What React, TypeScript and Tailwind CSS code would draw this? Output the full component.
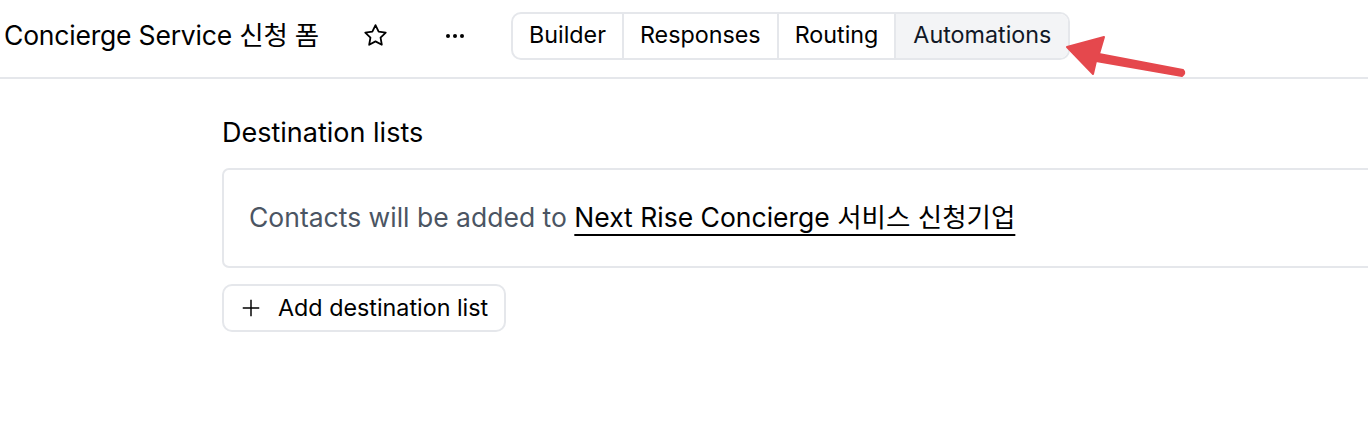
import React from "react";

export default function App() {
  const font = { fontFamily: "Inter, 'Noto Sans CJK KR', sans-serif" };
  return (
    <div className="relative w-[1368px] h-[436px] bg-white overflow-hidden text-black" style={font}>
      <div className="flex items-center h-[79px] border-b-2 border-[#e5e7eb] pl-[4px] pb-[6px]">
        <div className="text-[26.5px] leading-none tracking-[-0.2px]">Concierge Service 신청 폼</div>
        <button className="ml-[42px] w-[28px] h-[28px] flex items-center justify-center">
          <svg width="27" height="27" viewBox="0 0 24 24" fill="none" stroke="black" strokeWidth="1.6" strokeLinejoin="round">
            <path d="M12 2.8l2.8 5.8 6.3.9-4.6 4.4 1.1 6.3L12 17.2l-5.6 3 1.1-6.3-4.6-4.4 6.3-.9z" />
          </svg>
        </button>
        <button className="ml-[54px] w-[24px] h-[24px] flex items-center justify-center gap-[3px]">
          <span className="w-[4px] h-[4px] rounded-full bg-black" />
          <span className="w-[4px] h-[4px] rounded-full bg-black" />
          <span className="w-[4px] h-[4px] rounded-full bg-black" />
        </button>
        <div className="ml-[44px] flex h-[48px] border-2 border-[#e5e7eb] rounded-[10px] overflow-hidden text-[23.3px]">
          <div className="flex items-center px-[16px] border-r-2 border-[#e5e7eb]">Builder</div>
          <div className="flex items-center px-[16px] border-r-2 border-[#e5e7eb]">Responses</div>
          <div className="flex items-center px-[16px] border-r-2 border-[#e5e7eb]">Routing</div>
          <div className="flex items-center px-[17px] bg-[#f3f4f6] text-[#111827]">Automations</div>
        </div>
      </div>
      <div className="pl-[222px] pt-[37px]">
        <div className="text-[27px] leading-[34px]">Destination lists</div>
        <div className="mt-[18px] w-[1160px] h-[100px] border-2 border-[#e5e7eb] rounded-[7px] flex items-center pl-[25px] text-[26.5px]">
          <span className="text-[#4b5563]">Contacts will be added to&nbsp;</span>
          <span className="underline decoration-2 underline-offset-[7px]">Next Rise Concierge 서비스 신청기업</span>
        </div>
        <button className="mt-[16px] h-[48px] flex items-center border-2 border-[#e5e7eb] rounded-[10px] pl-[16px] pr-[16px] text-[23.3px]">
          <svg width="22" height="22" viewBox="0 0 24 24" fill="none" stroke="black" strokeWidth="1.6">
            <path d="M12 3v18M3 12h18" />
          </svg>
          <span className="ml-[16px]">Add destination list</span>
        </button>
      </div>
      <svg className="absolute left-0 top-0" width="1368" height="436" viewBox="0 0 1368 436">
        <path d="M1067 47 L1104 37 L1099 54 L1183 70 Q1186 73 1182 76 L1096 61 L1093 74 Z" fill="#e5484d" stroke="#e5484d" strokeWidth="2" strokeLinejoin="round" />
      </svg>
    </div>
  );
}
